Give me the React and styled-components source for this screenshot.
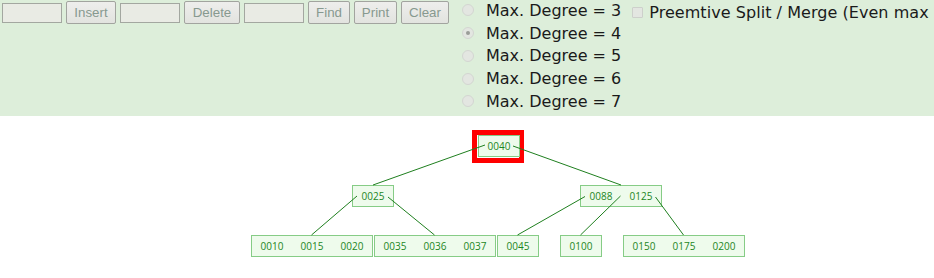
import React from 'react';
import styled, { createGlobalStyle } from 'styled-components';

const GlobalStyle = createGlobalStyle`
  html, body {
    margin: 0;
    padding: 0;
    background: #ffffff;
    overflow: hidden;
  }
`;

const Page = styled.div`
  width: 934px;
  height: 278px;
  display: flex;
  flex-direction: column;
  overflow: hidden;
`;

const ControlPanel = styled.div`
  height: 116px;
  flex-shrink: 0;
  background: #ddeeda;
  display: flex;
  align-items: flex-start;
  white-space: nowrap;
`;

const Toolbar = styled.div`
  display: flex;
  align-items: center;
  gap: 4px;
  padding: 1px 0 0 2px;
`;

const TextBox = styled.input`
  box-sizing: border-box;
  width: 60px;
  height: 20px;
  margin: 1px 0 0;
  padding: 0 2px;
  background: #e9ebe4;
  border: 1px solid #a3a7a0;
  outline: none;
`;

const Button = styled.button`
  box-sizing: border-box;
  height: 23px;
  width: ${(p) => p.$w}px;
  margin: 0;
  padding: 0;
  background: linear-gradient(#eeeeec, #e2e3df);
  border: 1px solid #a2a49f;
  border-radius: 2px;
  color: #87998f;
  font-family: 'Liberation Sans', Arial, sans-serif;
  font-size: 13.333px;
`;

const RadioGroup = styled.div`
  display: flex;
  flex-direction: column;
  margin: -1px 0 0 13px;
`;

const OptionRow = styled.label`
  display: flex;
  align-items: center;
  height: 22.75px;
  font-family: 'DejaVu Sans', Verdana, sans-serif;
  font-size: 16px;
  color: #1a1a1a;
`;

const RadioDot = styled.span`
  box-sizing: border-box;
  width: 12px;
  height: 12px;
  margin-right: 12px;
  border-radius: 50%;
  background: #e3e6e1;
  border: 1px solid #d3d6d1;
  display: flex;
  align-items: center;
  justify-content: center;

  &::after {
    content: '';
    width: 4px;
    height: 4px;
    border-radius: 50%;
    background: ${(p) => (p.$checked ? '#9a9d98' : 'transparent')};
  }
`;

const CheckRow = styled.label`
  display: flex;
  align-items: center;
  margin: 1px 0 0 11px;
  height: 22px;
  font-family: 'DejaVu Sans', Verdana, sans-serif;
  font-size: 16px;
  letter-spacing: 0.05px;
  color: #1a1a1a;
`;

const CheckBox = styled.span`
  box-sizing: border-box;
  width: 11px;
  height: 11px;
  margin: 0 6px 0 0;
  background: #e3e6e1;
  border: 1px solid #cdd0cb;
  border-radius: 1px;
`;

const Canvas = styled.svg`
  display: block;
  flex: 1;
`;

const KEY_W = 40;
const NODE_H = 21;

const nodes = [
  { x: 478, y: 19, keys: ['0040'] },
  { x: 352, y: 69, keys: ['0025'] },
  { x: 580, y: 69, keys: ['0088', '0125'] },
  { x: 251, y: 119, keys: ['0010', '0015', '0020'] },
  { x: 374, y: 119, keys: ['0035', '0036', '0037'] },
  { x: 497, y: 119, keys: ['0045'] },
  { x: 560, y: 119, keys: ['0100'] },
  { x: 623, y: 119, keys: ['0150', '0175', '0200'] },
];

const edges = [
  [485, 29, 373, 69],
  [513, 30, 621, 69],
  [357, 80, 311.5, 119],
  [388, 81, 434.5, 119],
  [585, 80.5, 517.5, 119],
  [620.5, 80, 580.5, 119],
  [655.5, 81, 683.5, 119],
];

const TreeNode = ({ x, y, keys }) => (
  <g>
    <rect
      x={x + 0.5}
      y={y + 0.5}
      width={keys.length * KEY_W + 1}
      height={NODE_H}
      fill="#eefbec"
      stroke="#86cc86"
    />
    {keys.map((k, i) => (
      <text
        key={k}
        x={x + i * KEY_W + KEY_W / 2 + 1}
        y={y + 14.5}
        textAnchor="middle"
        fontFamily="'Open Sans', 'Noto Sans', sans-serif"
        fontSize="10"
        fill="#1d861d"
      >
        {k}
      </text>
    ))}
  </g>
);

const degrees = [3, 4, 5, 6, 7];

export default function App() {
  return (
    <>
      <GlobalStyle />
      <Page>
        <ControlPanel>
          <Toolbar>
            <TextBox />
            <Button $w={50} disabled>Insert</Button>
            <TextBox />
            <Button $w={56} disabled>Delete</Button>
            <TextBox />
            <Button $w={42} disabled>Find</Button>
            <Button $w={43} disabled>Print</Button>
            <Button $w={48} disabled>Clear</Button>
          </Toolbar>
          <RadioGroup>
            {degrees.map((d) => (
              <OptionRow key={d}>
                <RadioDot $checked={d === 4} />
                Max. Degree = {d}
              </OptionRow>
            ))}
          </RadioGroup>
          <CheckRow>
            <CheckBox />
            Preemtive Split / Merge (Even max
          </CheckRow>
        </ControlPanel>
        <Canvas width="934" height="162">
          <rect x="474.5" y="16.5" width="47" height="28" fill="none" stroke="#ff0000" strokeWidth="5" />
          {nodes.map((n) => (
            <TreeNode key={n.keys.join('-')} {...n} />
          ))}
          {edges.map(([x1, y1, x2, y2], i) => (
            <line key={i} x1={x1} y1={y1} x2={x2} y2={y2} stroke="#1f7f1f" strokeWidth="1" />
          ))}
        </Canvas>
      </Page>
    </>
  );
}
